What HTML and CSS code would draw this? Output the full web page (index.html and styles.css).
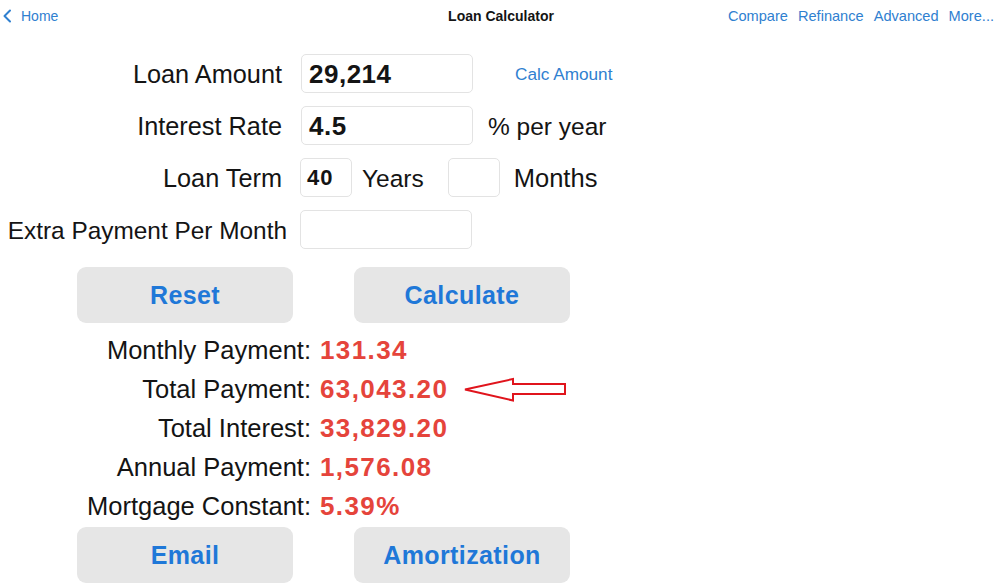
FILE: index.html
```html
<!DOCTYPE html>
<html lang="en">
<head>
<meta charset="utf-8">
<title>Loan Calculator</title>
<link rel="stylesheet" href="styles.css">
</head>
<body>
<header class="nav">
  <a class="back">
    <svg class="chev" width="10" height="14" viewBox="0 0 10 14"><path d="M8 1.5 L2.5 7 L8 12.5" fill="none" stroke="#2f80d0" stroke-width="2" stroke-linecap="round" stroke-linejoin="round"/></svg>
    <span>Home</span>
  </a>
  <div class="title">Loan Calculator</div>
  <nav class="links">
    <a>Compare</a><a>Refinance</a><a>Advanced</a><a>More...</a>
  </nav>
</header>

<main class="calc">
  <div class="row">
    <label class="lbl">Loan Amount</label>
    <div class="field wide">29,214</div>
    <a class="calc-amount">Calc Amount</a>
  </div>
  <div class="row">
    <label class="lbl">Interest Rate</label>
    <div class="field wide">4.5</div>
    <span class="unit unit-rate">% per year</span>
  </div>
  <div class="row">
    <label class="lbl">Loan Term</label>
    <div class="field small">40</div>
    <span class="unit unit-years">Years</span>
    <div class="field small empty"></div>
    <span class="unit unit-months">Months</span>
  </div>
  <div class="row">
    <label class="lbl lbl-extra">Extra Payment Per Month</label>
    <div class="field wide"></div>
  </div>

  <div class="buttons top-buttons">
    <button class="btn">Reset</button>
    <button class="btn">Calculate</button>
  </div>

  <div class="results">
    <div class="rlbl">Monthly Payment:</div><div class="rval">131.34</div>
    <div class="rlbl">Total Payment:</div>
    <div class="rval">63,043.20
      <svg class="arrow" width="106" height="28" viewBox="0 0 106 28"><path d="M2 13.5 L50 3 L50 8 L102 8 L102 18 L50 18 L50 24.5 Z" fill="none" stroke="#e0141c" stroke-width="2" stroke-linejoin="miter"/></svg>
    </div>
    <div class="rlbl">Total Interest:</div><div class="rval">33,829.20</div>
    <div class="rlbl">Annual Payment:</div><div class="rval">1,576.08</div>
    <div class="rlbl">Mortgage Constant:</div><div class="rval">5.39%</div>
  </div>

  <div class="buttons bottom-buttons">
    <button class="btn">Email</button>
    <button class="btn">Amortization</button>
  </div>
</main>
</body>
</html>
```

FILE: styles.css
```css
* { box-sizing: border-box; }

html, body {
  margin: 0;
  padding: 0;
  background: #ffffff;
  width: 1002px;
  height: 583px;
  overflow: hidden;
}

body {
  font-family: "Liberation Sans", Arial, sans-serif;
  color: #141414;
}

a { cursor: pointer; }

.nav {
  display: grid;
  grid-template-columns: 1fr auto 1fr;
  align-items: center;
  height: 32px;
  font-size: 14px;
}

.back {
  display: flex;
  align-items: center;
  gap: 9px;
  padding-left: 2px;
  color: #2f80d0;
}

.chev { display: block; }

.title {
  font-weight: bold;
  color: #141414;
}

.links {
  display: flex;
  justify-content: flex-end;
  gap: 10px;
  padding-right: 8px;
  font-size: 14.6px;
  color: #2f80d0;
}

.calc {
  padding-top: 22px;
}

.row {
  display: flex;
  align-items: center;
  height: 39px;
  margin-bottom: 13px;
  font-size: 24.5px;
}

.lbl {
  width: 282px;
  text-align: right;
  margin-right: 19px;
  white-space: nowrap;
  font-size: 25.3px;
  padding-top: 2px;
}

.lbl-extra {
  margin-right: 13px;
  width: 287px;
  font-size: 24.4px;
}

.unit { padding-top: 2px; }

.field {
  height: 39px;
  border: 1px solid #e3e3e3;
  border-radius: 5px;
  background: #fff;
  font-weight: bold;
  font-size: 26px;
  letter-spacing: 0.5px;
  display: flex;
  align-items: center;
  padding-left: 7px;
  padding-top: 1px;
}

.field.wide {
  width: 172px;
}

.field.small {
  width: 52px;
  font-size: 22px;
  letter-spacing: 1px;
  padding-left: 6px;
}

.calc-amount {
  margin-left: 42px;
  font-size: 17.2px;
  color: #2f80d0;
  padding-top: 2px;
}

.unit-rate { margin-left: 15px; }
.unit-years { margin-left: 10px; margin-right: 24px; }
.unit-months { margin-left: 14px; font-size: 25.5px; }

.row:nth-child(3) .lbl { margin-right: 18px; }

.buttons {
  display: flex;
  gap: 61px;
  padding-left: 77px;
}

.top-buttons {
  margin-top: 18px;
}

.btn {
  width: 216px;
  height: 56px;
  border: none;
  border-radius: 9px;
  background: #e6e6e6;
  color: #1f78d8;
  font-family: "Liberation Sans", Arial, sans-serif;
  font-weight: bold;
  font-size: 25px;
  letter-spacing: 0.4px;
  padding: 0;
}

.results {
  display: grid;
  grid-template-columns: 311px auto;
  column-gap: 9px;
  margin-top: 8px;
  margin-bottom: 1px;
  font-size: 25.5px;
  line-height: 39px;
}

.rlbl {
  text-align: right;
  white-space: nowrap;
}

.rval {
  color: #e5443b;
  font-weight: bold;
  font-size: 26px;
  letter-spacing: 1.4px;
  display: flex;
  align-items: center;
}

.arrow {
  margin-left: 15px;
  display: block;
}
```
